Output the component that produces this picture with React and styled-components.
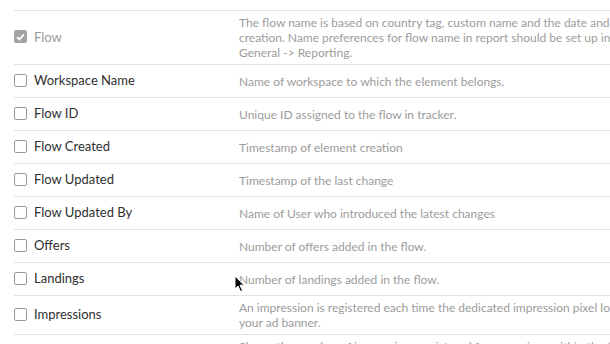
import React from "react"
import styled, { createGlobalStyle } from "styled-components"

const Global = createGlobalStyle`
  html, body {
    margin: 0;
    padding: 0;
    background: #fff;
    overflow: hidden;
  }
  body {
    font-family: Lato, "Open Sans", sans-serif;
  }
`

const Page = styled.div`
  position: relative;
  width: 610px;
  height: 344px;
  overflow: hidden;
  padding-top: 10px;
  box-sizing: border-box;
`

const Table = styled.div`
  margin-left: 14px;
  width: 657px;
`

const Row = styled.div`
  display: grid;
  grid-template-columns: 225px 432px;
  border-top: 1px solid #e3e3e3;
  min-height: 32px;
`

const LabelCell = styled.label`
  display: flex;
  align-items: center;
  gap: 7px;
  padding-bottom: 2px;
  font-size: 13px;
  color: ${p => (p.disabled ? "#9b9b9b" : "#2f2f2f")};
`

const Box = styled.span`
  width: 13px;
  height: 13px;
  box-sizing: border-box;
  border: 1px solid ${p => (p.checked ? "#a3a3a3" : "#9a9a9a")};
  border-radius: 2px;
  background: ${p => (p.checked ? "#a3a3a3" : "#fff")};
  display: flex;
  align-items: center;
  justify-content: center;
  flex: none;
`

const Desc = styled.div`
  align-self: center;
  padding: 4px 0;
  font-size: 12px;
  line-height: 15px;
  color: #9c9c9c;
`

const Cursor = styled.svg`
  position: absolute;
  left: 234px;
  top: 275px;
`

const rows = [
  {
    label: "Flow",
    checked: true,
    disabled: true,
    desc: "The flow name is based on country tag, custom name and the date and time of creation. Name preferences for flow name in report should be set up in Settings General -> Reporting.",
  },
  { label: "Workspace Name", desc: "Name of workspace to which the element belongs." },
  { label: "Flow ID", desc: "Unique ID assigned to the flow in tracker." },
  { label: "Flow Created", desc: "Timestamp of element creation" },
  { label: "Flow Updated", desc: "Timestamp of the last change" },
  { label: "Flow Updated By", desc: "Name of User who introduced the latest changes" },
  { label: "Offers", desc: "Number of offers added in the flow." },
  { label: "Landings", desc: "Number of landings added in the flow." },
  {
    label: "Impressions",
    desc: "An impression is registered each time the dedicated impression pixel loads within your ad banner.",
  },
  {
    label: "Visits",
    desc: "Shows the number of impressions registered for campaigns within the flow in the selected time range.",
  },
]

const Check = () => (
  <svg width="9" height="8" viewBox="0 0 9 8">
    <path d="M1 4.2 L3.4 6.4 L8 1.4" fill="none" stroke="#fff" strokeWidth="1.8" />
  </svg>
)

export default function App() {
  return (
    <Page>
      <Global />
      <Table>
        {rows.map(r => (
          <Row key={r.label}>
            <LabelCell disabled={r.disabled}>
              <Box checked={r.checked}>{r.checked && <Check />}</Box>
              {r.label}
            </LabelCell>
            <Desc>{r.desc}</Desc>
          </Row>
        ))}
      </Table>
      <Cursor width="12" height="18" viewBox="0 0 12 18">
        <path d="M1 1 L1 14 L4 11 L6.5 16.5 L8.5 15.6 L6 10.2 L10 10.2 Z" fill="#000" stroke="#fff" strokeWidth="1" />
      </Cursor>
    </Page>
  )
}
